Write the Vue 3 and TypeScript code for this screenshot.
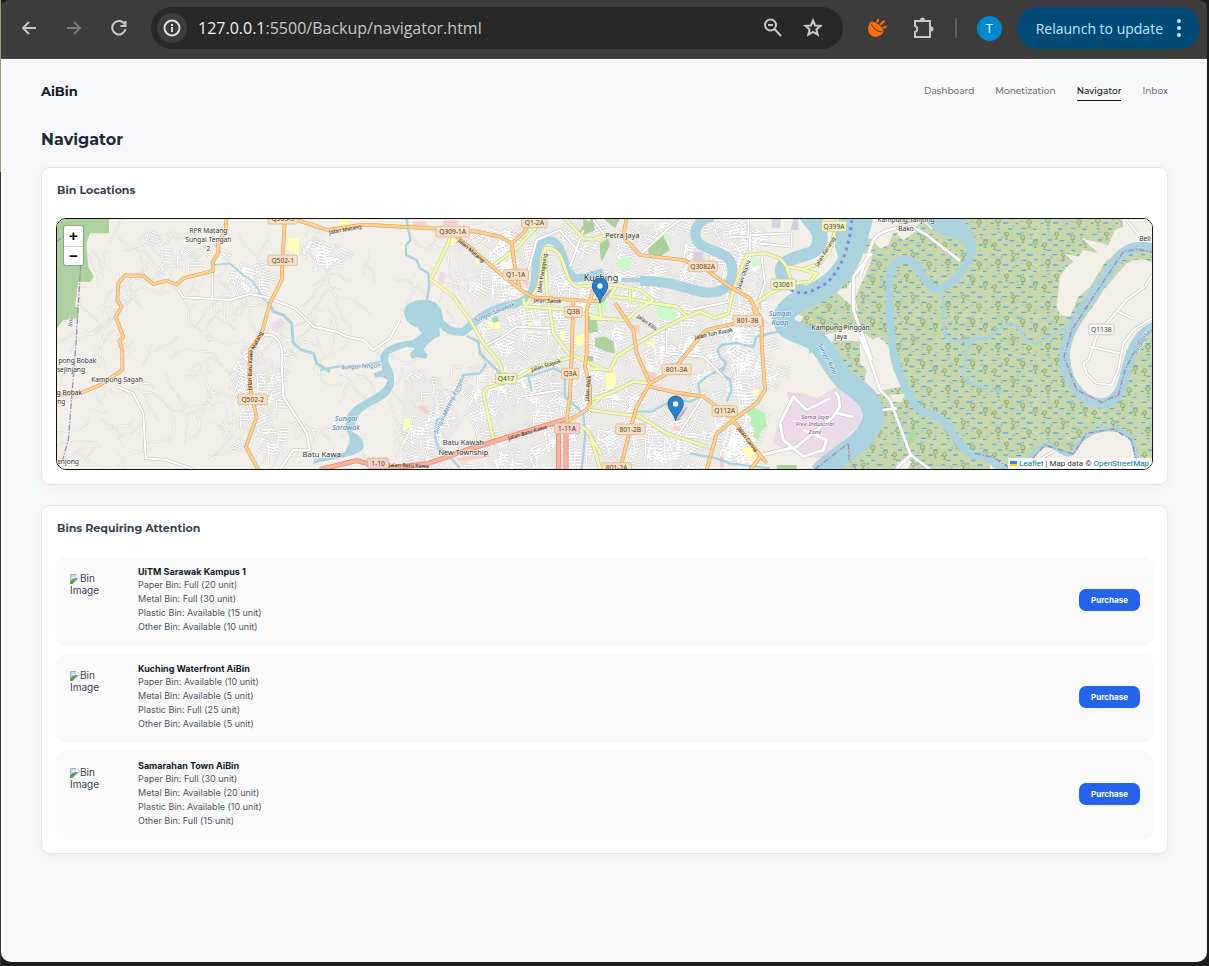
<script setup lang="ts">
interface Bin { name: string; lines: string[] }
interface Shape { at: Sheet; d: string; w?: number; fill?: string }
interface Label { at: Sheet; x: number; y: number; text: string; size?: number; turn?: number; kind?: string }
type Sheet = 'west' | 'centre' | 'east' | 'coast'

const bins: Bin[] = [
  { name: 'UiTM Sarawak Kampus 1', lines: ['Paper Bin: Full (20 unit)', 'Metal Bin: Full (30 unit)', 'Plastic Bin: Available (15 unit)', 'Other Bin: Available (10 unit)'] },
  { name: 'Kuching Waterfront AiBin', lines: ['Paper Bin: Available (10 unit)', 'Metal Bin: Available (5 unit)', 'Plastic Bin: Full (25 unit)', 'Other Bin: Available (5 unit)'] },
  { name: 'Samarahan Town AiBin', lines: ['Paper Bin: Full (30 unit)', 'Metal Bin: Available (20 unit)', 'Plastic Bin: Available (10 unit)', 'Other Bin: Full (15 unit)'] },
]
const links = ['Dashboard', 'Monetization', 'Navigator', 'Inbox']

// The map is drawn in four side-by-side sheets, each with its own origin.
const origin: Record<Sheet, number> = { west: -21, centre: 789, east: 1599, coast: 2409 }
const place = (s: Sheet) => `translate(${origin[s]} -27)`

const land: Shape[] = [
  { at: 'west', fill: '#add19e', d: 'M20 20H177V70H120L108 100L115 170L132 200L120 215H85L75 290H85V325L40 330L20 355Z' },
  { at: 'west', fill: '#ebdbe8', d: 'M668 340L690 328L705 335L700 352L690 352L685 365L665 362Z' },
  { at: 'west', fill: '#ffffb8', d: 'M715 85H747V135H735V120H710Z' },
  { at: 'centre', fill: '#ffffb8', d: 'M57 26H85V50L57 57ZM390 75L410 90L395 110L385 98ZM465 145L485 155L470 168ZM720 365L738 365L735 388L722 385ZM765 380L795 370L798 400L770 408ZM500 335H540V355H515ZM250 630L270 625L272 650L250 665ZM625 335L640 340L635 360L622 350Z' },
  { at: 'centre', fill: '#ebdbe8', d: 'M362 185L377 190L372 222L350 225Z' },
  { at: 'centre', fill: '#f6cfca', d: 'M278 35H322V47H278ZM370 30H415V45H370ZM610 215L630 212L620 232ZM292 590L310 585L332 605L320 613ZM505 400L520 385L525 395L510 408ZM410 745L500 725L510 740L425 755Z' },
  { at: 'centre', fill: '#add19e', d: 'M790 26L820 40L825 60L790 75L778 65L790 45ZM805 310L830 330L835 365L805 370ZM800 435L820 440L818 455H802Z' },
  { at: 'centre', fill: '#8fdfb8', d: 'M515 325L530 318L538 333L520 338Z' },
  { at: 'east', fill: '#add19e', d: 'M40 26H90L75 55ZM175 110L220 75L240 120L210 140L175 130ZM15 385L45 380L70 395L75 430L50 425L15 410ZM0 26H20L0 60ZM30 100L55 85L60 105L35 155L30 130ZM560 765H620V778H560Z' },
  { at: 'east', fill: '#c8facc', d: 'M200 290L245 290L260 310L250 330H215L200 315ZM80 150L110 140L130 150L120 175H85ZM15 260L50 270V300L15 315ZM485 145H510V168H485ZM220 75L235 68L240 85L225 90Z' },
  { at: 'east', fill: '#b5f0b8', d: 'M468 608L490 590L525 610L530 650L515 660L505 690L488 680L495 660L480 640L485 625Z' },
  { at: 'east', fill: '#ffffb8', d: 'M45 490H80L75 530L50 535ZM170 395L195 392V408L175 412ZM490 535L508 540L505 555H490ZM455 710L490 715L500 750L480 755ZM65 465L78 470L70 482Z' },
  { at: 'east', fill: '#f6cfca', d: 'M125 345H150L147 370L130 365ZM415 225L435 222L430 245L418 250ZM160 480L200 490L195 510L165 500ZM270 548L300 550L298 562L275 560ZM500 275H515V300L500 295ZM390 740H400V775H390ZM250 645L270 650L272 662H250Z' },
  { at: 'east', fill: '#d8cfdf', d: 'M545 26H572V55H545ZM610 26H625V60H602ZM310 125H340V150H310Z' },
  { at: 'east', fill: 'url(#mangrove)', d: 'M860 20L800 95L760 200L600 270V330L680 370L720 430L790 540L850 560V640L740 710L680 780H1700V20Z' },
  { at: 'east', fill: '#f2efe9', d: 'M725 235L805 305L795 265L845 150V130H800L790 200L770 235ZM700 375L790 350L845 385V460L815 395L740 390L705 405ZM600 300L640 320L625 345L600 350Z' },
  { at: 'coast', fill: '#f2efe9', d: 'M0 26H110L125 60L100 70L85 105L60 115L30 85L0 110ZM100 45L180 35L165 65L130 90L115 75ZM0 140L30 145L0 165ZM185 30L225 35L215 60ZM0 380L25 395L55 380L90 410L100 480L130 530L100 535L70 540L60 555L10 530L20 480L0 460ZM90 555L135 552L125 575L95 577ZM110 760L140 740L155 755L140 778H110Z' },
  { at: 'coast', fill: '#f2efe9', d: 'M785 20H885V110L740 150L690 230L655 260L630 320L600 315L590 290L600 200L620 170L640 155L612 130L655 140L670 120L715 130L665 85L745 105L765 60L790 50Z' },
  { at: 'coast', fill: '#f2efe9', d: 'M800 160C840 140 870 150 885 165V340L830 370C810 420 800 480 780 530C760 570 710 575 670 545C640 520 630 480 630 420C640 350 700 300 730 240ZM390 742L430 760L440 780H390ZM500 770L550 710C580 700 600 740 640 735L665 700C690 665 770 650 800 680C825 700 820 740 830 780H500Z' },
  { at: 'coast', fill: '#a8dba5', d: 'M140 670L165 660L172 685L155 700L137 692Z' },
]
const industry: Shape[] = [
  { at: 'east', d: 'M590 545L640 550L680 565L740 530L800 570L815 600V640L760 690L710 745L640 742L590 720L550 700L560 650L600 590Z' },
]
const lakes: Shape[] = [
  { at: 'centre', d: 'M252 305C254 278 286 269 315 269C350 269 370 296 370 335L358 352L360 378L345 385L320 405L310 420L323 435L318 447L290 440L275 448L270 430L285 415L260 410L210 430C200 440 205 460 215 475C225 500 228 530 205 555C180 580 130 590 115 620L95 665C125 675 135 700 130 715C110 740 70 740 -20 762V748C30 740 60 735 75 725C90 700 95 690 80 660C70 620 90 600 110 585C150 560 195 545 203 510L185 500L165 503L162 490L187 480L180 440C190 410 230 395 280 390L305 370L292 352C270 345 252 330 252 305Z' },
  { at: 'east', d: 'M625 20H700V70C705 110 690 135 650 140L620 140C670 115 680 80 650 55ZM742 20H850L842 60L800 95L750 160L735 110Z' },
  { at: 'coast', d: 'M180 20H290C340 50 352 90 350 125L325 135C320 95 290 85 240 75ZM0 26L35 26C20 40 5 60 0 90Z' },
]
const rivers: Shape[] = [
  { at: 'centre', w: 24, d: 'M355 330C380 362 400 367 430 366C455 345 470 325 510 305C560 280 610 285 630 255C655 220 640 160 655 115C670 82 700 82 718 112C738 150 740 200 770 205C800 205 820 195 850 186' },
  { at: 'east', w: 30, d: 'M370 20C310 30 305 80 330 103C370 130 427 125 427 180C427 225 400 250 350 248C290 240 250 212 150 212' },
  { at: 'east', w: 14, d: 'M95 210L160 210M0 188L35 195L45 215' },
  { at: 'east', w: 38, d: 'M665 20C700 60 710 110 660 130C610 145 570 155 574 185C578 215 600 220 640 245' },
  { at: 'east', w: 64, d: 'M815 10C805 100 775 190 700 235C660 262 595 275 578 325C590 370 620 360 665 385C710 410 720 470 770 515C820 550 850 570 850 625C830 710 740 730 690 790' },
  { at: 'coast', w: 24, d: 'M335 100C345 140 290 220 240 238C200 240 190 190 165 162C140 135 90 150 90 200C85 280 90 400 110 470C140 540 160 600 200 610C280 620 280 720 345 735C400 740 400 770 450 784' },
  { at: 'coast', w: 31, d: 'M885 118C820 95 770 130 750 180C700 260 620 340 612 440C620 540 690 585 730 580C790 570 790 500 810 440C830 380 860 360 885 350' },
  { at: 'coast', w: 14, d: 'M440 780C500 770 520 710 560 705C600 710 620 755 645 720C670 660 740 650 770 660C830 670 820 720 840 780' },
  { at: 'west', w: 5, d: 'M490 165L540 160L580 195L610 215L640 265L660 285' },
  { at: 'west', w: 9, d: 'M655 275L670 305L700 315L725 340L730 400L755 420L790 430L800 460L840 485' },
  { at: 'centre', w: 7, d: 'M258 20L265 60L272 90L258 105V135L290 150L300 175L325 190L328 230L320 275M0 480L50 470L120 468L185 455M440 378L475 395L480 430L510 460L550 500M500 460L480 490L430 495L420 540L395 570L375 620L350 630L345 680L355 715L380 730L420 775M590 500L640 495L700 475L735 490V560L790 610L795 680L785 778M625 500L635 540' },
  { at: 'east', w: 7, d: 'M565 365L500 380L490 410L460 405L440 398L395 405L382 420L390 440L408 460L395 490L420 510L425 540L410 575M405 470L350 500L325 520L330 560L300 575L260 570L220 585L185 605L140 605M300 730L380 745L420 760L540 775M660 380V430' },
  { at: 'coast', w: 8, d: 'M240 245C265 290 240 340 260 385C290 410 330 380 360 385C410 390 420 330 455 340C490 360 490 390 520 400C560 400 580 350 640 355M350 385C310 410 320 440 310 480C300 510 340 530 430 548' },
]
const minor: Shape[] = [
  { at: 'west', d: 'M385 240L400 262L540 270L600 252L650 262L735 295L790 350L840 360M640 375C690 370 700 410 695 460L700 560L770 670L780 720L730 720L690 778M200 530L250 550L280 610L287 745L350 750L430 778M487 180V265' },
  { at: 'centre', d: 'M0 355L50 365L80 380L130 390L160 420L210 385L240 330M490 410L540 385L590 350L700 355M620 200L650 90L720 60L780 130M600 560L720 540M790 60L750 170' },
  { at: 'east', d: 'M150 135L230 60L270 30M420 80H480V125M480 75L605 70V110L500 100M475 26V80M515 140L525 220L500 290M300 300L415 275L430 240M230 360V430L340 440L400 500M340 560L300 620L260 680M10 30L40 70' },
  { at: 'east', w: 9, d: 'M515 735L620 710L730 620L750 590L745 560L735 545M570 640L610 560L650 600L720 565M570 640L580 690L640 740L700 720L710 690L640 660M740 610L790 620M845 130L790 200V300L845 450' },
  { at: 'coast', w: 8, d: 'M0 200L40 90C60 60 110 50 160 52L200 75L300 152M0 380L30 450L60 540L90 570L152 735L110 775M152 735L210 778M68 600L110 595' },
  { at: 'coast', d: 'M885 185L855 230L800 270L740 340L710 380L685 450L670 460L680 490L710 520L755 525M885 320L820 360L790 400L775 480L755 525M690 410L780 430M775 305L815 325M800 30L840 80L880 90M510 765L580 725' },
]
const secondary: Shape[] = [
  { at: 'centre', d: 'M395 60L385 100L332 208L400 260L450 330L490 400L540 460L552 500M520 690L490 550L500 535L600 500L650 470L760 440M650 50L590 115L520 165M675 115L680 240L700 370L745 430L845 475M690 115C740 120 730 220 770 230L845 225M615 290L740 298L845 325M730 20L790 85L845 90M610 265L615 290L655 230L675 115H690M750 630L800 660L845 735M810 590L845 560' },
  { at: 'east', d: 'M0 325L110 330L140 300L190 270L150 240L80 225H0M80 225L60 260L110 265L190 280L260 290L290 320L230 350L150 395L80 440L60 480L0 475M120 240V280M290 320L330 305L375 325L415 310L430 240L470 135L525 130L570 145L590 170L640 178L690 160L720 120L745 20M590 170L605 220M490 285L540 250L610 220L660 215L680 190L640 180M180 520L130 515L70 545L0 570M0 600L150 620L230 670L350 710M0 90L50 75L100 75M0 680L20 740L30 778M20 230L35 330' },
]
const primary: Shape[] = [
  { at: 'west', d: 'M530 20L527 60L505 100V130L488 155L490 182L400 205L380 224L350 212L310 222L280 197L225 196L205 220L202 270L215 290L197 320L220 380L208 393L217 420V480L150 525L95 548L10 556M705 20L698 140L695 210L660 280L635 370L600 420L598 500L605 560L620 620L588 710L625 780M740 30L815 55' },
  { at: 'centre', d: 'M-30 40L20 60L130 44L350 56L470 65L540 80L575 100L583 160L600 240M410 80L470 130L540 190L610 245L640 262L760 270L845 275M575 100L610 70L640 20M760 270L755 440L750 560L738 640M820 240L800 300V430L795 470L810 530V580L800 600L740 635' },
  { at: 'east', d: 'M110 20L100 80L150 135L280 150L350 180L420 230L480 265L515 330V400L525 540L500 580L430 630L380 670L350 780M75 280L130 360L140 430L180 520L140 590L120 660L90 780M180 520L250 480L330 380L350 360L500 325L490 290M180 530L260 548L340 560L425 625L530 760M515 735L480 780' },
]
const trunk: Shape[] = [
  { at: 'centre', w: 13, d: 'M0 778L110 752L200 775L320 762L440 720L735 628M716 640V780M738 640V780' },
]
const borders: Shape[] = [
  { at: 'west', d: 'M92 165L78 400L55 690L38 750M20 95L45 75' },
  { at: 'coast', d: 'M885 128L830 118L790 125L720 230L635 360L612 440L650 540L725 577L775 555L795 480L840 390L885 355M345 730L400 742L450 775L500 765L555 705L640 732L680 670L760 657L815 690L835 778' },
  { at: 'east', d: 'M675 778L775 700L778 750L800 778' },
]

const labels: Label[] = [
  { at: 'west', x: 475, y: 70, text: 'RPR Matang' }, { at: 'west', x: 475, y: 96, text: 'Sungai Tengah' }, { at: 'west', x: 475, y: 123, text: '2' },
  { at: 'west', x: 82, y: 460, text: 'pong Bobak' }, { at: 'west', x: 63, y: 486, text: 'sejinjang' },
  { at: 'west', x: 201, y: 517, text: 'Kampung Sagah' }, { at: 'west', x: 58, y: 555, text: 'g Bobak' }, { at: 'west', x: 34, y: 581, text: 'ng' }, { at: 'west', x: 54, y: 761, text: 'anjong' },
  { at: 'west', x: 815, y: 741, text: 'Batu Kawa', size: 23 },
  { at: 'centre', x: 430, y: 706, text: 'Batu Kawah', size: 22 }, { at: 'centre', x: 430, y: 735, text: 'New Township', size: 22 },
  { at: 'east', x: 97, y: 84, text: 'Petra Jaya', size: 22 }, { at: 'east', x: 33, y: 213, text: 'Kuching', size: 27 },
  { at: 'east', x: 752, y: 361, text: 'Kampung Pinggan' }, { at: 'east', x: 752, y: 388, text: 'Jaya' },
  { at: 'coast', x: 138, y: 36, text: 'Kampung Tanjong' }, { at: 'coast', x: 138, y: 62, text: 'Bako' }, { at: 'coast', x: 855, y: 93, text: 'Beli' },
  { at: 'centre', x: 78, y: 634, text: 'Sungai', kind: 'water', size: 22 }, { at: 'centre', x: 78, y: 661, text: 'Sarawak', kind: 'water', size: 22 },
  { at: 'east', x: 570, y: 318, text: 'Sungai', kind: 'water', size: 22 }, { at: 'east', x: 570, y: 345, text: 'Kuap', kind: 'water', size: 22 },
  { at: 'centre', x: 123, y: 475, text: 'Sungai-Tengah', kind: 'water', turn: -3 },
  { at: 'centre', x: 525, y: 312, text: 'Sungai Sarawak', kind: 'water', turn: -23 },
  { at: 'centre', x: 390, y: 592, text: 'Sungai Matang-Kanan', kind: 'water', turn: -64 },
  { at: 'east', x: 708, y: 450, text: 'Sungai Kuap', kind: 'water', turn: 62 },
  { at: 'coast', x: 850, y: 400, text: 'Batang Sa', kind: 'water', turn: -58 },
  { at: 'east', x: 675, y: 627, text: 'Sama Jaya', kind: 'zone' }, { at: 'east', x: 675, y: 649, text: 'Free Industrial', kind: 'zone' }, { at: 'east', x: 675, y: 671, text: 'Zone', kind: 'zone' },
  { at: 'west', x: 606, y: 480, text: 'Jalan Batu Kawa', kind: 'road', turn: -88 }, { at: 'west', x: 626, y: 394, text: 'Matang', kind: 'road', turn: -63 },
  { at: 'centre', x: 77, y: 64, text: 'Jalan Matang', kind: 'road', turn: -11 }, { at: 'centre', x: 450, y: 126, text: 'Jalan Matang', kind: 'road', turn: 41 },
  { at: 'centre', x: 682, y: 278, text: 'Jalan Satok', kind: 'road', turn: 2 }, { at: 'centre', x: 672, y: 190, text: 'Jalan Panggung', kind: 'road', turn: -81 },
  { at: 'centre', x: 680, y: 471, text: 'Jalan Stapok', kind: 'road', turn: -17 }, { at: 'centre', x: 809, y: 535, text: 'Jalan Rock', kind: 'road', turn: -84 },
  { at: 'centre', x: 624, y: 673, text: 'Jalan Batu Kawa', kind: 'road', turn: -17 }, { at: 'centre', x: 266, y: 772, text: 'Jalan Batu Kawa', kind: 'road', turn: 2 },
  { at: 'east', x: 168, y: 342, text: 'Jalan Ellis', kind: 'road', turn: 36 }, { at: 'east', x: 372, y: 376, text: 'Jalan Tun Razak', kind: 'road', turn: -12 },
  { at: 'east', x: 466, y: 195, text: 'Jalan Utama', kind: 'road', turn: -70 }, { at: 'east', x: 710, y: 128, text: 'Jalan Keruing', kind: 'road', turn: -58 },
  { at: 'east', x: 468, y: 692, text: 'Jalan Canna', kind: 'road', turn: 53 }, { at: 'west', x: 68, y: 335, text: 'Bau', kind: 'zone', turn: -86 },
]
const shields: Label[] = [
  { at: 'west', x: 698, y: 26, text: 'Q503-3' }, { at: 'west', x: 698, y: 151, text: 'Q502-1' }, { at: 'west', x: 608, y: 568, text: 'Q502-2' },
  { at: 'centre', x: 398, y: 65, text: 'Q309-1A' }, { at: 'centre', x: 643, y: 37, text: 'Q1-2A' }, { at: 'centre', x: 587, y: 195, text: 'Q1-1A' },
  { at: 'centre', x: 760, y: 306, text: 'Q3B' }, { at: 'centre', x: 750, y: 491, text: 'Q3A' }, { at: 'centre', x: 558, y: 506, text: 'Q417', kind: 'lime' },
  { at: 'centre', x: 741, y: 655, text: '1-11A', kind: 'pink' }, { at: 'centre', x: 174, y: 760, text: '1-10', kind: 'pink' },
  { at: 'east', x: 338, y: 169, text: 'Q3082A' }, { at: 'east', x: 732, y: 49, text: 'Q399A', kind: 'lime' }, { at: 'east', x: 580, y: 223, text: 'Q3061', kind: 'lime' },
  { at: 'east', x: 473, y: 332, text: '801-3B' }, { at: 'east', x: 260, y: 478, text: '801-3A' }, { at: 'east', x: 404, y: 603, text: 'Q112A' },
  { at: 'east', x: 121, y: 658, text: '801-2B' }, { at: 'east', x: 80, y: 774, text: '801-2A' }, { at: 'coast', x: 724, y: 358, text: 'Q1138', kind: 'white' },
]
const pins = [{ x: 1629, y: 252 }, { x: 1856, y: 606 }]

// Small repeatable generator, so the side streets are the same on every load.
let seed = 41
const rnd = () => { seed = (seed * 16807) % 2147483647; return seed / 2147483647 }

function blocks(x: number, y: number, w: number, h: number, count: number): string {
  let d = ''
  for (let i = 0; i < count; i++) {
    const cx = x + rnd() * w, cy = y + rnd() * h, a = (rnd() - 0.5) * 1.3
    const len = 22 + rnd() * 34, rows = 2 + Math.floor(rnd() * 4), gap = 9
    const ux = Math.cos(a), uy = Math.sin(a)
    for (let r = 0; r < rows; r++) {
      d += `M${Math.round(cx - uy * gap * r)} ${Math.round(cy + ux * gap * r)}l${Math.round(ux * len)} ${Math.round(uy * len)}`
    }
    d += `M${Math.round(cx)} ${Math.round(cy)}l${Math.round(-uy * gap * (rows + 2))} ${Math.round(ux * gap * (rows + 2))}`
  }
  return d
}
function tracks(x: number, y: number, w: number, h: number, count: number): string {
  let d = ''
  for (let i = 0; i < count; i++) {
    let a = rnd() * 6.28
    d += `M${Math.round(x + rnd() * w)} ${Math.round(y + rnd() * h)}`
    const steps = 3 + Math.floor(rnd() * 5)
    for (let s = 0; s < steps; s++) {
      a += (rnd() - 0.5) * 1.5
      d += `l${Math.round(Math.cos(a) * 22)} ${Math.round(Math.sin(a) * 22)}`
    }
  }
  return d
}
const streets =
  blocks(1260, 0, 820, 740, 520) + blocks(2000, 10, 110, 560, 50) + blocks(1030, 440, 240, 300, 45) +
  blocks(1180, 30, 200, 160, 18) + blocks(530, 390, 150, 300, 40) + blocks(500, 130, 130, 80, 14) +
  blocks(2060, 350, 110, 130, 10) + blocks(730, 10, 130, 110, 14) + blocks(260, 0, 240, 140, 10) + blocks(1950, 560, 150, 170, 30)
const lanes = tracks(30, 40, 620, 690, 120) + tracks(640, 130, 420, 580, 45) + tracks(1050, 40, 200, 300, 14)
const estates = 'M1265 90L1390 20H2060V150L2110 300V520L2140 610L2080 740H1290L1250 560L1330 400L1240 300ZM1040 490L1140 470L1220 610L1110 740H1030ZM535 420H650V650L560 640ZM1190 60L1310 110V180L1200 150Z'
</script>

<template>
  <div class="window">
    <header class="toolbar">
      <button class="tool back" aria-label="Back"><svg width="20" height="20" viewBox="0 0 20 20"><path d="M17 10H4M10 4l-6 6 6 6" /></svg></button>
      <button class="tool forward" aria-label="Forward"><svg width="20" height="20" viewBox="0 0 20 20"><path d="M3 10h13M10 4l6 6-6 6" /></svg></button>
      <button class="tool reload" aria-label="Reload"><svg width="20" height="20" viewBox="0 0 20 20"><path d="M15.600 6.200A6.700 6.700 0 1 0 16.500 11M16.500 3v5h-5" /></svg></button>
      <div class="address">
        <button class="info" aria-label="Site information"><svg width="18" height="18" viewBox="0 0 18 18"><circle cx="9" cy="9" r="7.500" /><path d="M9 8v5M9 5v2" /></svg></button>
        <span class="url"><b>127.0.0.1</b>:5500/Backup/navigator.html</span>
        <button class="tool" aria-label="Zoom"><svg width="20" height="20" viewBox="0 0 20 20"><circle cx="7.500" cy="7" r="5.500" /><path d="M11.500 11l6.500 7M5 7h5" /></svg></button>
        <button class="tool" aria-label="Bookmark"><svg width="20" height="20" viewBox="0 0 20 20"><path d="M10 2.500l2.100 5 5.400.4-4.100 3.500 1.300 5.200L10 13.800l-4.700 2.800 1.300-5.200-4.100-3.500 5.400-.4z" /></svg></button>
      </div>
      <button class="tool ext" aria-label="Recorder extension">
        <svg width="22" height="22" viewBox="0 0 22 22">
          <path class="dish" d="M3.500 5C1 8 0 14 3 17.500 5 20 9 20.500 12 19c2-1 4-2.500 4.500-4.500C16 10 8 3 3.500 5z" />
          <path class="gap" d="M4.500 6.500c-.5 3 6.500 9.500 11 8" />
          <path class="ray" d="M10 5.500l1.500-3.500M13 8l4.500-4.500M15.500 11l4-1.500" />
        </svg>
      </button>
      <button class="tool puzzle" aria-label="Extensions">
        <svg width="24" height="24" viewBox="0 0 24 24">
          <path d="M4 5h15v16H4v-5c3-1 3-5 0-6z" /><path class="tab" d="M9 4a2.500 2.500 0 0 1 5 0zM20 10.500a2.500 2.500 0 0 1 0 5z" />
        </svg>
      </button>
      <span class="divider"></span>
      <button class="avatar" aria-label="Profile">T</button>
      <button class="relaunch">Relaunch to update<svg width="4" height="18" viewBox="0 0 4 18"><circle cx="2" cy="2" r="2" /><circle cx="2" cy="9" r="2" /><circle cx="2" cy="16" r="2" /></svg></button>
    </header>

    <main class="page">
      <div class="top">
        <span class="brand">AiBin</span>
        <nav>
          <a v-for="l in links" :key="l" href="#" :class="{ active: l === 'Navigator' }">{{ l }}</a>
        </nav>
      </div>
      <h1>Navigator</h1>

      <section class="card">
        <h2>Bin Locations</h2>
        <div class="map">
          <svg class="tiles" viewBox="0 0 3285 750" preserveAspectRatio="xMidYMid slice" role="img" aria-label="Map of Kuching">
            <defs>
              <pattern id="mangrove" width="150" height="126" patternUnits="userSpaceOnUse">
                <rect width="150" height="126" fill="#c8d7ab" />
                <path d="M4 8h11m22 0h14m28-2h9m24 3h16M18 23h14m31 3h10m22-1h15m23-2h10M2 40h9m28-1h16m21 2h9m26-2h14M20 56h9m25 1h13m26-2h15m21 3h10M5 73h15m22-2h9m29 1h14m25 2h10M24 90h12m22 2h15m22-3h9m26 1h13M3 107h9m28-2h13m25 2h15m23-2h12M19 121h14m27 1h10m24-1h12" stroke="#63aee0" stroke-width="4" />
                <path d="M30 15h9m40 2h9m-75 15h9m70 2h8m-34 13h9m60 2h8m-120 17h8m62 2h9m-70 15h8m80 1h8m-48 14h9" stroke="#98c6cd" stroke-width="4" />
                <g fill="#bcd09d" stroke="#7d9f66" stroke-width="2">
                  <path d="M24 38v9m-5 0h10M70 12v9m-5 0h10M117 42v9m-5 0h10M50 78v9m-5 0h10M98 88v9m-5 0h10M14 110v9m-5 0h10M136 103v9m-5 0h10" />
                  <circle cx="24" cy="32" r="7" /><circle cx="70" cy="8" r="6" /><circle cx="117" cy="36" r="7" /><circle cx="50" cy="72" r="6" /><circle cx="98" cy="82" r="7" /><circle cx="14" cy="104" r="6" /><circle cx="136" cy="97" r="6" />
                </g>
              </pattern>
            </defs>
            <rect width="3285" height="750" fill="#f2efe9" />
            <path :d="estates" fill="#eceae6" />
            <path :d="lanes" class="line" stroke="#d3d1ce" stroke-width="5" /><path :d="lanes" class="line" stroke="#fbfaf8" stroke-width="3" />
            <path :d="streets" class="line" stroke="#cbc9c8" stroke-width="5" /><path :d="streets" class="line" stroke="#fff" stroke-width="3" />
            <path v-for="(s, i) in land" :key="'l' + i" :transform="place(s.at)" :d="s.d" :fill="s.fill" />
            <path v-for="(s, i) in industry" :key="'i' + i" :transform="place(s.at)" :d="s.d" fill="#ebdbe8" />
            <path v-for="(s, i) in lakes" :key="'k' + i" :transform="place(s.at)" :d="s.d" fill="#aad3df" />
            <path v-for="(s, i) in rivers" :key="'r' + i" :transform="place(s.at)" :d="s.d" class="line" stroke="#aad3df" :stroke-width="s.w" />
            <path :transform="place('east')" d="M785 30C780 120 740 210 690 230C660 250 630 255 605 240" class="line" stroke="#7b86e6" stroke-width="8" stroke-dasharray="9 12" />
            <path v-for="(s, i) in borders" :key="'b' + i" :transform="place(s.at)" :d="s.d" class="line" stroke="#a58bb0" stroke-width="4" stroke-dasharray="18 5 4 5" />
            <path v-for="(s, i) in minor" :key="'mc' + i" :transform="place(s.at)" :d="s.d" class="line" stroke="#c2c0bd" :stroke-width="(s.w ?? 6) + 3" />
            <path v-for="(s, i) in minor" :key="'m' + i" :transform="place(s.at)" :d="s.d" class="line" stroke="#fff" :stroke-width="s.w ?? 6" />
            <path v-for="(s, i) in secondary" :key="'sc' + i" :transform="place(s.at)" :d="s.d" class="line" stroke="#c5ca85" stroke-width="11" />
            <path v-for="(s, i) in secondary" :key="'s' + i" :transform="place(s.at)" :d="s.d" class="line" stroke="#f3f6b5" stroke-width="8" />
            <path v-for="(s, i) in primary" :key="'pc' + i" :transform="place(s.at)" :d="s.d" class="line" stroke="#d39d51" stroke-width="11" />
            <path v-for="(s, i) in primary" :key="'p' + i" :transform="place(s.at)" :d="s.d" class="line" stroke="#fbcf95" stroke-width="8" />
            <path v-for="(s, i) in trunk" :key="'tc' + i" :transform="place(s.at)" :d="s.d" class="line" stroke="#e0806a" stroke-width="15" />
            <path v-for="(s, i) in trunk" :key="'t' + i" :transform="place(s.at)" :d="s.d" class="line" stroke="#f9b29c" stroke-width="11" />
            <g v-for="(s, i) in shields" :key="'q' + i" :transform="`translate(${s.x + origin[s.at]} ${s.y - 27})`" :class="['shield', s.kind]">
              <rect :x="-(s.text.length * 6 + 8)" y="-16" :width="s.text.length * 12 + 16" height="32" rx="5" />
              <text y="7">{{ s.text }}</text>
            </g>
            <text v-for="(t, i) in labels" :key="'n' + i" :transform="`translate(${t.x + origin[t.at]} ${t.y - 27}) rotate(${t.turn ?? 0})`" :font-size="t.size ?? (t.kind === 'road' ? 16 : t.kind ? 18 : 20)" :class="['name', t.kind]">{{ t.text }}</text>
            <g v-for="p in pins" :key="p.x" :transform="`translate(${p.x} ${p.y})`">
              <path d="M0 0L18 -28C30 -42 38 -48 34 -38L12 -4Z" fill="#555" opacity=".35" />
              <path d="M0 0C-3 -20 -23 -32 -23 -52A23 23 0 0 1 23 -52C23 -32 3 -20 0 0Z" fill="#2b7fc4" stroke="#2769a6" stroke-width="3" />
              <circle cy="-51" r="8" fill="#fff" />
            </g>
          </svg>
          <div class="zoom"><button aria-label="Zoom in">+</button><button aria-label="Zoom out">−</button></div>
          <div class="credit">
            <svg width="7" height="5" viewBox="0 0 7 5"><path fill="#4c7be1" d="M0 0h7v3H0z" /><path fill="#ffd500" d="M0 3h7v2H0z" /></svg>
            <span><a href="#">Leaflet</a> | Map data © <a href="#">OpenStreetMap</a></span>
          </div>
        </div>
      </section>

      <section class="card">
        <h2>Bins Requiring Attention</h2>
        <ul class="bins">
          <li v-for="b in bins" :key="b.name">
            <div class="thumb">
              <svg width="10" height="10" viewBox="0 0 10 10"><path fill="#c2d6f6" stroke="#a9b4c2" d="M.5.500h6l3 3v6h-9z" /><path fill="#fff" d="M6 0v4h4z" /><path fill="#fff" d="M2 4c0-2 3-2 3 0z" /><path fill="#4da13e" d="M0 10V8c2-3 4-4 8-4L2 10z" /><path fill="#fafafa" d="M10 4v6H3z" /></svg>Bin Image
            </div>
            <div class="details">
              <h3>{{ b.name }}</h3>
              <p v-for="t in b.lines" :key="t">{{ t }}</p>
            </div>
            <button class="buy">Purchase</button>
          </li>
        </ul>
      </section>
    </main>
  </div>
</template>

<style>
body { margin: 0; }
</style>

<style scoped>
* { box-sizing: border-box; }
button { border: 0; padding: 0; background: none; font: inherit; color: inherit; cursor: pointer; }
.window { min-height: 100vh; display: flex; flex-direction: column; padding: 0 2px 4px 1px; background: linear-gradient(#a2977c 0 172px, #333 172px) left / 1px 100% no-repeat, #1d1d1d; }
.toolbar { display: flex; align-items: center; height: 59px; padding: 0 7px 2px 18px; background: #3c3c3c; border-radius: 8px 8px 0 0; border-bottom: 1px solid #464646; font-family: "Open Sans", "Noto Sans", sans-serif; }
.tool { display: grid; place-items: center; width: 20px; height: 24px; }
.tool svg { fill: none; stroke: #c7c7c7; stroke-width: 2; }
.forward { margin-left: 25px; }
.forward svg { stroke: #7c7c7c; }
.reload { margin-left: 25px; }
.address { flex: 1; display: flex; align-items: center; height: 42px; margin-left: 22px; padding: 0 20px 0 6px; gap: 20px; border-radius: 21px; background: #282828; }
.info { display: grid; place-items: center; width: 30px; height: 30px; border-radius: 50%; background: #3c3c3c; }
.info svg { fill: none; stroke: #dedede; stroke-width: 2; }
.url { flex: 1; margin-left: -9px; font-size: 16px; color: #c4c7c5; white-space: nowrap; }
.url b { font-weight: 400; color: #f0f0f0; }
.ext { width: 22px; margin-left: 24px; }
.ext .dish { fill: #ff6d0a; stroke: none; }
.ext .gap { fill: none; stroke: #3c3c3c; stroke-width: 1; }
.ext .ray { fill: none; stroke: #ff6d0a; stroke-width: 2; }
.puzzle { width: 24px; margin-left: 22px; }
.puzzle .tab { fill: #c7c7c7; stroke: none; }
.divider { width: 2px; height: 20px; margin: 0 20px; background: #5b5b5b; }
.avatar { width: 25px; height: 25px; border-radius: 50%; background: #0288d1; color: #fff; font-size: 12px; }
.relaunch { display: flex; align-items: center; gap: 14px; height: 42px; margin-left: 15px; padding: 0 19px; border-radius: 21px; background: #004a77; color: #c2e7ff; font-size: 14px; white-space: nowrap; }
.relaunch svg { fill: #c2e7ff; }
.page { flex: 1; padding: 20px 39px 40px 40px; background: #f7f8fa; border-radius: 0 0 10px 10px; font-family: Montserrat, Inter, "Open Sans", sans-serif; color: #1f2937; }
.top { display: flex; justify-content: space-between; align-items: center; height: 24px; }
.brand { font-size: 13px; font-weight: 700; color: #111827; }
nav { display: flex; gap: 21px; font-size: 9px; font-weight: 500; }
nav a { height: 20px; line-height: 20px; color: #6b7280; text-decoration: none; }
nav a.active { color: #111827; border-bottom: 1px solid #111827; }
h1 { margin: 24px 0 15px; font-size: 16px; line-height: 25px; font-weight: 700; }
.card { padding: 14px; background: #fff; border: 1px solid #e5e7eb; border-radius: 9px; box-shadow: 0 2px 8px rgba(0, 0, 0, .04); }
.card + .card { margin-top: 20px; }
h2 { margin: 0 1px 20px; font-size: 11px; line-height: 16px; font-weight: 700; color: #374151; }
.map { position: relative; height: 252px; overflow: hidden; border: 1px solid #111; border-radius: 10px; }
.tiles { display: block; width: 100%; height: 100%; }
.line { fill: none; stroke-linejoin: round; stroke-linecap: butt; }
.name { text-anchor: middle; font-family: "Noto Sans", sans-serif; fill: #333; stroke: #fff; stroke-opacity: .6; stroke-width: 4; paint-order: stroke; }
.name.water { fill: #4d80b3; font-style: italic; }
.name.zone { fill: #80608a; font-style: italic; }
.name.road { fill: #222; stroke: none; }
.shield rect { fill: #f5e0c5; stroke: #d8ae82; stroke-width: 2; }
.shield text { text-anchor: middle; font: 20px "Noto Sans", sans-serif; fill: #594422; }
.shield.lime rect { fill: #eef0c8; stroke: #bcc28b; }
.shield.pink rect { fill: #f6cfc9; stroke: #dfa094; }
.shield.white rect { fill: #f4f4f4; stroke: #bbb; }
.zoom { position: absolute; left: 7px; top: 7px; display: grid; background: #fff; border-radius: 2px; box-shadow: 0 0 0 1px rgba(0, 0, 0, .2); }
.zoom button { width: 19px; height: 20px; font: 700 15px/18px "Liberation Sans", sans-serif; color: #000; }
.zoom button + button { border-top: 1px solid #ccc; height: 19px; line-height: 16px; }
.credit { position: absolute; right: 0; bottom: 0; display: flex; align-items: center; gap: 2px; padding: 0 3px 0 2px; background: rgba(255, 255, 255, .8); font: 8px/11px Roboto, sans-serif; color: #333; white-space: nowrap; }
.credit a { color: #0078a8; text-decoration: none; }
.bins { display: grid; gap: 10px; margin: 0 0 1px; padding: 1px 0 0; list-style: none; font-family: Inter, sans-serif; }
.bins li { display: flex; align-items: center; height: 87px; padding: 7px 13px 9px; background: #fafafa; border-radius: 10px; box-shadow: 0 1px 2px rgba(0, 0, 0, .05); }
.thumb { align-self: flex-start; width: 48px; height: 48px; margin: 8px 20px 0 1px; padding-right: 16px; font-size: 10px; line-height: 12px; color: #374151; }
.thumb svg { vertical-align: -2px; }
.details { flex: 1; font-size: 9px; line-height: 14px; color: #4b5563; }
h3 { margin: 0; font-size: 9px; line-height: 13px; font-weight: 700; color: #111827; }
p { margin: 0; }
.buy { width: 61px; height: 22px; border-radius: 7px; background: #2563eb; color: #fff; font-size: 8px; font-weight: 700; }
</style>
